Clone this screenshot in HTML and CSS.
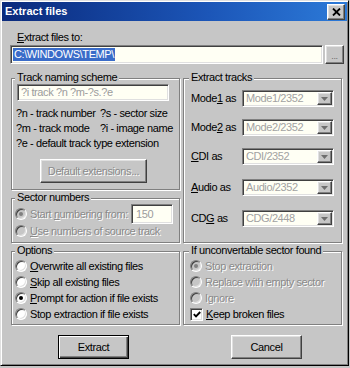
FILE: index.html
```html
<!DOCTYPE html>
<html lang="en">
<head>
    <meta charset="UTF-8">
    <title>Extract files</title>
    <link rel="stylesheet" href="styles.css">
</head>
<body>
    <div class="window">
        <div class="titlebar">
            <span class="title">Extract files</span>
            <span class="btn close">
                <svg width="9" height="8" viewBox="0 0 9 8"><path d="M1 0.5 L8 7.5 M8 0.5 L1 7.5" stroke="#000" stroke-width="1.8"/></svg>
            </span>
        </div>
        <div class="content">
            <div class="path-label"><u>E</u>xtract files to:</div>
            <div class="path-row">
                <div class="field path-field"><span class="selected">C:\WINDOWS\TEMP\</span></div>
                <div class="btn browse">...</div>
            </div>

            <div class="columns">
                <div class="column left">
                    <div class="group naming">
                        <div class="group-title">Track naming scheme</div>
                        <div class="field scheme-field">?i track ?n ?m-?s.?e</div>
                        <div class="legend-lines">
                            <div class="legend-line"><span class="key">?n - track number</span><span>?s - sector size</span></div>
                            <div class="legend-line"><span class="key">?m - track mode</span><span>?i - image name</span></div>
                            <div class="legend-line"><span>?e - default track type extension</span></div>
                        </div>
                        <div class="btn ext-btn disabled">Default extensions...</div>
                    </div>

                    <div class="group sectors">
                        <div class="group-title">Sector numbers</div>
                        <div class="sector-row">
                            <span class="radio checked off"></span>
                            <span class="disabled label">Start <u>n</u>umbering from:</span>
                            <div class="field number-field">150</div>
                        </div>
                        <div class="sector-row second">
                            <span class="radio off"></span>
                            <span class="disabled label"><u>U</u>se numbers of source track</span>
                        </div>
                    </div>

                    <div class="group options">
                        <div class="group-title">Options</div>
                        <div class="choices">
                            <div class="choice"><span class="radio"></span><span><u>O</u>verwrite all existing files</span></div>
                            <div class="choice"><span class="radio"></span><span><u>S</u>kip all existing files</span></div>
                            <div class="choice"><span class="radio checked"></span><span><u>P</u>rompt for action if file exists</span></div>
                            <div class="choice"><span class="radio"></span><span>Stop extraction if file exists</span></div>
                        </div>
                    </div>
                </div>

                <div class="column right">
                    <div class="group tracks">
                        <div class="group-title">Extract tracks</div>
                        <div class="track-row first">
                            <span>Mode<u>1</u> as</span>
                            <div class="field combo"><span class="combo-text">Mode1/2352</span><span class="btn combo-btn"><svg width="7" height="4" viewBox="0 0 7 4"><path d="M0 0 H7 L3.5 4 Z" fill="#6e6e6e"/></svg></span></div>
                        </div>
                        <div class="track-row">
                            <span>Mode<u>2</u> as</span>
                            <div class="field combo"><span class="combo-text">Mode2/2352</span><span class="btn combo-btn"><svg width="7" height="4" viewBox="0 0 7 4"><path d="M0 0 H7 L3.5 4 Z" fill="#6e6e6e"/></svg></span></div>
                        </div>
                        <div class="track-row">
                            <span><u>C</u>DI as</span>
                            <div class="field combo"><span class="combo-text">CDI/2352</span><span class="btn combo-btn"><svg width="7" height="4" viewBox="0 0 7 4"><path d="M0 0 H7 L3.5 4 Z" fill="#6e6e6e"/></svg></span></div>
                        </div>
                        <div class="track-row wide">
                            <span><u>A</u>udio as</span>
                            <div class="field combo"><span class="combo-text">Audio/2352</span><span class="btn combo-btn"><svg width="7" height="4" viewBox="0 0 7 4"><path d="M0 0 H7 L3.5 4 Z" fill="#6e6e6e"/></svg></span></div>
                        </div>
                        <div class="track-row wide">
                            <span>CD<u>G</u> as</span>
                            <div class="field combo"><span class="combo-text">CDG/2448</span><span class="btn combo-btn"><svg width="7" height="4" viewBox="0 0 7 4"><path d="M0 0 H7 L3.5 4 Z" fill="#6e6e6e"/></svg></span></div>
                        </div>
                    </div>

                    <div class="group unconvertable">
                        <div class="group-title">If unconvertable sector found</div>
                        <div class="choices">
                            <div class="choice"><span class="radio checked off"></span><span class="disabled">Stop extraction</span></div>
                            <div class="choice"><span class="radio off"></span><span class="disabled">Replace with empty sector</span></div>
                            <div class="choice"><span class="radio off"></span><span class="disabled">Ignore</span></div>
                            <div class="choice">
                                <span class="check"><svg width="8" height="7" viewBox="0 0 8 7"><path d="M0.8 3.2 L3 5.4 L7.2 1" fill="none" stroke="#000" stroke-width="1.9"/></svg></span>
                                <span><u>K</u>eep broken files</span>
                            </div>
                        </div>
                    </div>
                </div>
            </div>

            <div class="actions">
                <div class="btn action default">Extract</div>
                <div class="btn action cancel">Cancel</div>
            </div>
        </div>
    </div>
</body>
</html>
```

FILE: styles.css
```css
:root {
    --face: #c6c6c6;
    --shadow: #808080;
    --dark: #404040;
    --light: #e0e0e0;
    --field: #fffff4;
    --disabled: #8a8a8a;
}

* {
    box-sizing: border-box;
}

body {
    margin: 0;
    background: var(--face);
    font-family: "Liberation Sans", Arial, sans-serif;
    font-size: 11px;
    line-height: 13px;
    letter-spacing: -0.4px;
    color: #000;
}

u {
    text-decoration-thickness: 1px;
    text-underline-offset: 1px;
}

.window {
    width: 349px;
    height: 366px;
    padding: 1px;
    background: var(--face);
    border: 1px solid;
    border-color: var(--light) #000 #000 var(--light);
    box-shadow: inset 1px 1px #fff, inset -1px -1px var(--shadow);
    display: flex;
    flex-direction: column;
}

/* title bar */
.titlebar {
    height: 19px;
    padding: 0 2px 0 3px;
    display: flex;
    align-items: center;
    justify-content: space-between;
    background: linear-gradient(90deg, #0a2a7c 0%, #1c56b8 60%, #2c7ad8 100%);
}

.title {
    color: #fff;
    font-weight: bold;
    letter-spacing: 0;
}

.btn {
    display: flex;
    align-items: center;
    justify-content: center;
    background: var(--face);
    border: 1px solid;
    border-color: #fff var(--dark) var(--dark) #fff;
    box-shadow: inset -1px -1px var(--shadow), inset 1px 1px var(--light);
}

.close {
    width: 18px;
    height: 16px;
}

/* fields */
.field {
    background: var(--field);
    border: 1px solid;
    border-color: var(--shadow) #fff #fff var(--shadow);
    box-shadow: inset 1px 1px var(--dark), inset -1px -1px var(--light);
}

.disabled {
    color: var(--disabled);
    text-shadow: 1px 1px #fff;
}

.content {
    padding: 10px 3px 0 8px;
    display: flex;
    flex-direction: column;
}

.path-label {
    padding-left: 7px;
}

.path-row {
    margin-top: 1px;
    height: 19px;
    display: flex;
    gap: 2px;
}

.path-field {
    flex: 1;
    display: flex;
    align-items: center;
    padding-left: 2px;
}

.selected {
    background: #3a6cc9;
    color: #fff;
    padding: 0 1px;
}

.browse {
    width: 19px;
    color: #6a6a6a;
    font-size: 9px;
    padding-top: 4px;
}

/* groups */
.columns {
    margin: 14px 0 0 1px;
    display: flex;
    gap: 3px;
}

.column {
    display: flex;
    flex-direction: column;
    gap: 8px;
}

.left {
    width: 169px;
}

.right {
    width: 159px;
}

.group {
    border: 1px solid var(--shadow);
    box-shadow: inset 1px 1px #fff, 1px 1px #fff;
    display: flex;
    flex-direction: column;
}

.group-title {
    align-self: flex-start;
    margin: -8px 0 0 3px;
    padding: 0 2px;
    background: var(--face);
}

.right .group-title {
    margin-left: 5px;
}

.naming {
    height: 112px;
}

.scheme-field {
    margin-left: 5px;
    width: 152px;
    height: 17px;
    padding-left: 3px;
    color: #9c9c9c;
    line-height: 15px;
}

.legend-lines {
    margin: 5px 0 0 4px;
    line-height: 15px;
}

.legend-line {
    display: flex;
}

.key {
    width: 84px;
}

.ext-btn {
    margin: 8px 0 0 28px;
    width: 107px;
    height: 24px;
}

.sectors {
    height: 45px;
}

.sector-row {
    height: 20px;
    padding-left: 3px;
    display: flex;
    align-items: center;
    gap: 3px;
}

.sector-row.second {
    height: 14px;
}

.sector-row .label {
    flex: none;
    white-space: nowrap;
}

.number-field {
    margin: 0 7px 0 auto;
    width: 42px;
    height: 20px;
    flex: none;
    padding: 3px 0 0 4px;
    color: #9c9c9c;
}

.options,
.unconvertable {
    height: 74px;
}

.choices {
    margin-top: 1px;
    padding-left: 3px;
}

.unconvertable .choices {
    padding-left: 6px;
}

.choice {
    height: 16px;
    display: flex;
    align-items: center;
    gap: 3px;
    white-space: nowrap;
}

.radio {
    width: 12px;
    height: 12px;
    flex: none;
    border-radius: 50%;
    background: #fff;
    border: 1px solid;
    border-color: var(--shadow) #fff #fff var(--shadow);
    box-shadow: inset 1px 1px var(--dark), inset -1px -1px var(--light);
    display: flex;
    align-items: center;
    justify-content: center;
}

.radio.checked::after {
    content: "";
    width: 4px;
    height: 4px;
    border-radius: 50%;
    background: #000;
}

.radio.off {
    background: var(--face);
}

.radio.off.checked::after {
    background: var(--shadow);
}

.check {
    width: 13px;
    height: 13px;
    flex: none;
    background: #fff;
    border: 1px solid;
    border-color: var(--shadow) #fff #fff var(--shadow);
    box-shadow: inset 1px 1px var(--dark), inset -1px -1px var(--light);
    display: flex;
    align-items: center;
    justify-content: center;
}

/* extract tracks */
.tracks {
    height: 165px;
}

.track-row {
    height: 17px;
    margin-top: 12px;
    padding: 0 7px;
    display: flex;
    align-items: center;
}

.track-row.first {
    margin-top: 6px;
}

.track-row.wide {
    margin-top: 14px;
}

.combo {
    margin-left: auto;
    width: 92px;
    height: 17px;
    padding: 1px;
    display: flex;
}

.combo-text {
    flex: 1;
    padding-left: 2px;
    color: #a2a2a2;
}

.combo-btn {
    width: 15px;
}

/* buttons */
.actions {
    margin-top: 10px;
    display: flex;
}

.action {
    width: 71px;
    height: 24px;
}

.action.default {
    margin-left: 48px;
    border: 1px solid #000;
    box-shadow: inset 1px 1px #fff, inset -1px -1px var(--dark), inset -2px -2px var(--shadow);
}

.action.cancel {
    margin-left: 102px;
}
```
